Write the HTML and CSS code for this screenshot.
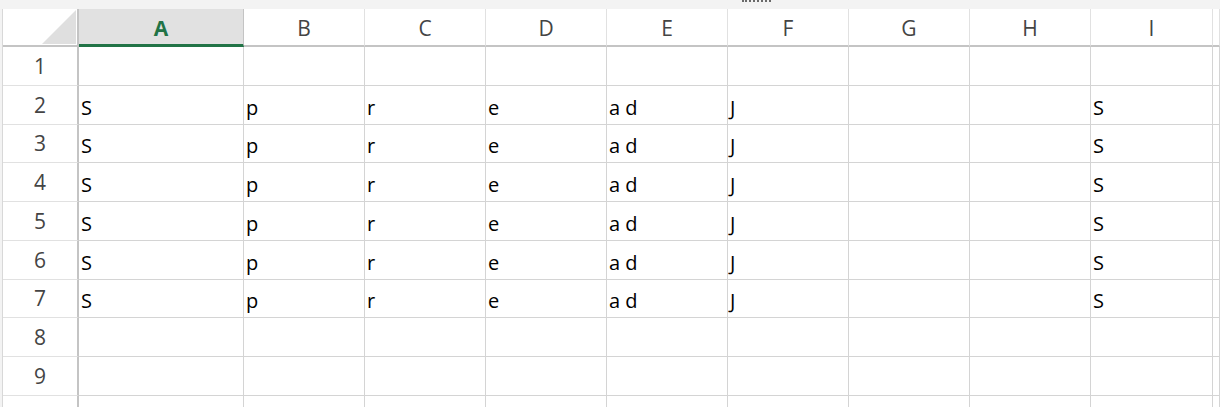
FILE: index.html
```html
<!DOCTYPE html>
<html lang="en">
<head>
  <meta charset="UTF-8" />
  <title>Sheet1</title>
  <link rel="stylesheet" href="styles.css">
</head>
<body>
  <div class="topbar"><span class="dots"></span></div>
  <div class="sheet">
    <div class="corner">
      <svg width="34" height="34" viewBox="0 0 34 34"><polygon points="34,0 34,34 0,34" fill="#dfdfdf"/></svg>
    </div>
    <div class="col-head active">A</div>
    <div class="col-head">B</div>
    <div class="col-head">C</div>
    <div class="col-head">D</div>
    <div class="col-head">E</div>
    <div class="col-head">F</div>
    <div class="col-head">G</div>
    <div class="col-head">H</div>
    <div class="col-head">I</div>
    <div class="col-head"></div>
  </div>
  <script>
    const sheet = document.querySelector(".sheet");
    const rowData = ["S", "p", "r", "e", "a d", "J", "", "", "S", ""];
    // row 10 is only partly on screen, its number falls below the fold
    for (let r = 1; r <= 10; r++) {
      const head = document.createElement("div");
      head.className = "row-head";
      if (r < 10) head.textContent = r;
      sheet.appendChild(head);
      for (let c = 0; c < 10; c++) {
        const cell = document.createElement("div");
        cell.className = "cell";
        if (r >= 2 && r <= 7) cell.textContent = rowData[c];
        sheet.appendChild(cell);
      }
    }
  </script>
</body>
</html>
```

FILE: styles.css
```css
body {
  margin: 0;
  background: #f3f3f3;
  overflow: hidden;
}

.topbar {
  height: 9px;
  display: flex;
}

.dots {
  margin-left: 742px;
  width: 29px;
  height: 0;
  border-top: 2px dotted #6a6a6a;
}

.sheet {
  margin-left: 2px;
  height: 398px;
  overflow: hidden;
  background: #fff;
  border-left: 1px solid #d8d8d8;
  display: grid;
  grid-template-columns: 76px 165px repeat(7, 121px) 122px 1fr;
  grid-template-rows: 38px;
  grid-auto-rows: 38.75px;
  font-family: "Open Sans", "Noto Sans", sans-serif;
}

.corner {
  border-right: 2px solid #c4c4c4;
  border-bottom: 2px solid #c4c4c4;
  display: flex;
  align-items: flex-end;
  justify-content: flex-end;
  padding: 0 1px 1px 0;
  box-sizing: border-box;
}

.corner svg {
  display: block;
}

.col-head {
  border-right: 1px solid #e1e1e1;
  border-bottom: 2px solid #c4c4c4;
  color: #444;
  font-size: 21px;
  display: flex;
  align-items: center;
  justify-content: center;
  padding-top: 2px;
  box-sizing: border-box;
}

.col-head.active {
  background: #e1e1e1;
  color: #217346;
  font-weight: bold;
  border-bottom: 3px solid #217346;
  border-right-color: #c4c4c4;
}

.row-head {
  border-right: 2px solid #c4c4c4;
  border-bottom: 1px solid #e1e1e1;
  color: #444;
  font-size: 21px;
  display: flex;
  align-items: center;
  justify-content: center;
  box-sizing: border-box;
}

.cell {
  border-right: 1px solid #d4d4d4;
  border-bottom: 1px solid #d4d4d4;
  color: #000;
  font-size: 20px;
  display: flex;
  align-items: flex-end;
  padding: 0 0 3px 2px;
  box-sizing: border-box;
  white-space: pre;
  overflow: hidden;
}
```
